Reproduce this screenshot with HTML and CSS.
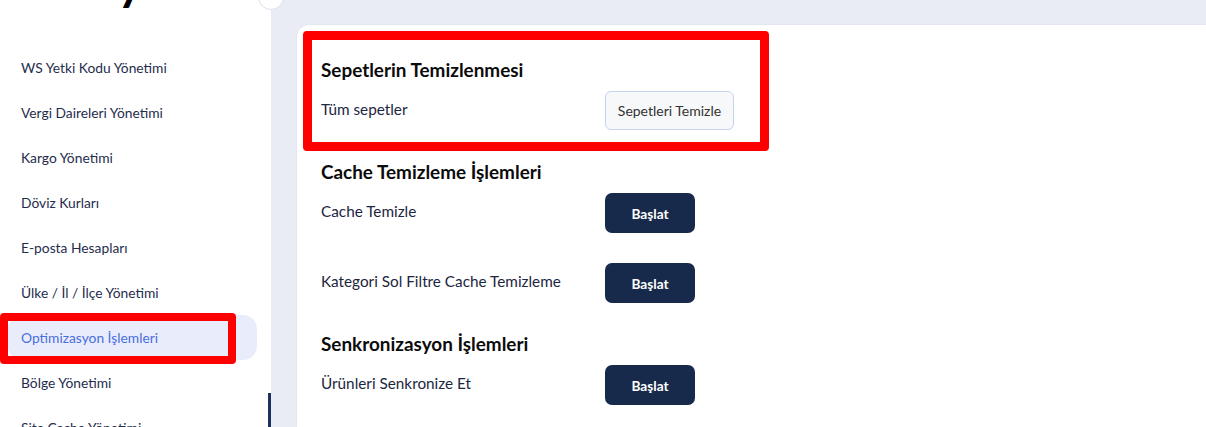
FILE: index.html
```html
<!DOCTYPE html>
<html lang="tr">
<head>
    <meta charset="UTF-8">
    <meta name="viewport" content="width=device-width, initial-scale=1.0">
    <title>Optimizasyon İşlemleri</title>
    <link rel="stylesheet" href="styles.css">
</head>
<body>
    <div class="layout">
        <aside class="sidebar">
            <div class="logo"><span>y</span></div>
            <button class="toggle"></button>
            <nav class="menu">
                <a class="menu-item">WS Yetki Kodu Yönetimi</a>
                <a class="menu-item">Vergi Daireleri Yönetimi</a>
                <a class="menu-item">Kargo Yönetimi</a>
                <a class="menu-item">Döviz Kurları</a>
                <a class="menu-item">E-posta Hesapları</a>
                <a class="menu-item">Ülke / İl / İlçe Yönetimi</a>
                <a class="menu-item active">Optimizasyon İşlemleri</a>
                <a class="menu-item">Bölge Yönetimi</a>
                <a class="menu-item">Site Cache Yönetimi</a>
            </nav>
            <div class="mark mark-menu"></div>
            <div class="scroll-thumb"></div>
        </aside>

        <main class="content">
            <div class="card">
                <section class="section marked">
                    <h3>Sepetlerin Temizlenmesi</h3>
                    <div class="row">
                        <span class="label">Tüm sepetler</span>
                        <button class="btn btn-light">Sepetleri Temizle</button>
                    </div>
                </section>

                <section class="section">
                    <h3>Cache Temizleme İşlemleri</h3>
                    <div class="row">
                        <span class="label">Cache Temizle</span>
                        <button class="btn btn-dark">Başlat</button>
                    </div>
                    <div class="row">
                        <span class="label">Kategori Sol Filtre Cache Temizleme</span>
                        <button class="btn btn-dark">Başlat</button>
                    </div>
                </section>

                <section class="section">
                    <h3>Senkronizasyon İşlemleri</h3>
                    <div class="row">
                        <span class="label">Ürünleri Senkronize Et</span>
                        <button class="btn btn-dark">Başlat</button>
                    </div>
                </section>
            </div>
        </main>
    </div>
</body>
</html>
```

FILE: styles.css
```css
* {
    box-sizing: border-box;
}

body {
    margin: 0;
    font-family: 'Lato', 'DejaVu Sans', sans-serif;
    background-color: #e9ecf4;
    color: #1c2640;
    height: 427px;
    overflow: hidden;
}

.layout {
    display: flex;
    height: 100%;
}

/* sidebar */

.sidebar {
    position: relative;
    width: 271px;
    flex-shrink: 0;
    background-color: #fff;
}

.logo {
    height: 45px;
    overflow: hidden;
    padding-left: 118px;
}

.logo span {
    display: block;
    margin-top: -42px;
    font-size: 44px;
    font-weight: 900;
    color: #000;
}

.toggle {
    position: absolute;
    top: -16px;
    right: -13px;
    width: 26px;
    height: 26px;
    border-radius: 50%;
    border: 1px solid #dde1ea;
    background-color: #fff;
    z-index: 2;
}

.menu {
    display: flex;
    flex-direction: column;
}

.menu-item {
    display: flex;
    align-items: center;
    height: 45px;
    margin: 0 14px 0 8px;
    padding-left: 13px;
    border-radius: 14px;
    font-size: 13.8px;
    color: #1f2d4d;
    text-decoration: none;
}

.menu-item.active {
    background-color: #e8ecfb;
    color: #4a6ee0;
}

.mark {
    border: 8px solid #ff0000;
    border-radius: 4px;
}

.mark-menu {
    position: absolute;
    left: 0;
    top: 313px;
    width: 236px;
    height: 51px;
}

.scroll-thumb {
    position: absolute;
    right: 0;
    top: 393px;
    width: 3px;
    height: 40px;
    background-color: #1d3160;
}

/* content */

.content {
    flex: 1;
    padding: 25px 0 0 26px;
}

.card {
    height: 100%;
    background-color: #fff;
    border-radius: 12px 0 0 0;
    box-shadow: 0 0 2px rgba(30, 40, 80, 0.08);
    padding: 6px 0 0 6px;
}

.section {
    width: 466px;
    padding: 9px 18px 20px;
}

.section.marked {
    border: 9px solid #ff0000;
    border-radius: 4px;
    padding: 18px 9px 12px;
}

.section h3 {
    margin: 0 0 9px;
    font-size: 18.9px;
    line-height: 24px;
    font-weight: 700;
    color: #0b0b0b;
}

.row {
    display: flex;
    align-items: flex-start;
}

.row + .row {
    margin-top: 30px;
}

.label {
    width: 284px;
    padding-top: 8px;
    font-size: 15.3px;
    line-height: 20px;
}

.btn {
    height: 40px;
    border-radius: 7px;
    font-family: inherit;
    cursor: pointer;
}

.btn-light {
    width: 129px;
    height: 39px;
    background-color: #f6f8fa;
    border: 1px solid #c5d3f3;
    border-radius: 6px;
    font-size: 14px;
    color: #333;
}

.btn-dark {
    width: 90px;
    background-color: #172a4c;
    border: none;
    font-size: 13.7px;
    font-weight: 700;
    color: #fff;
}
```
